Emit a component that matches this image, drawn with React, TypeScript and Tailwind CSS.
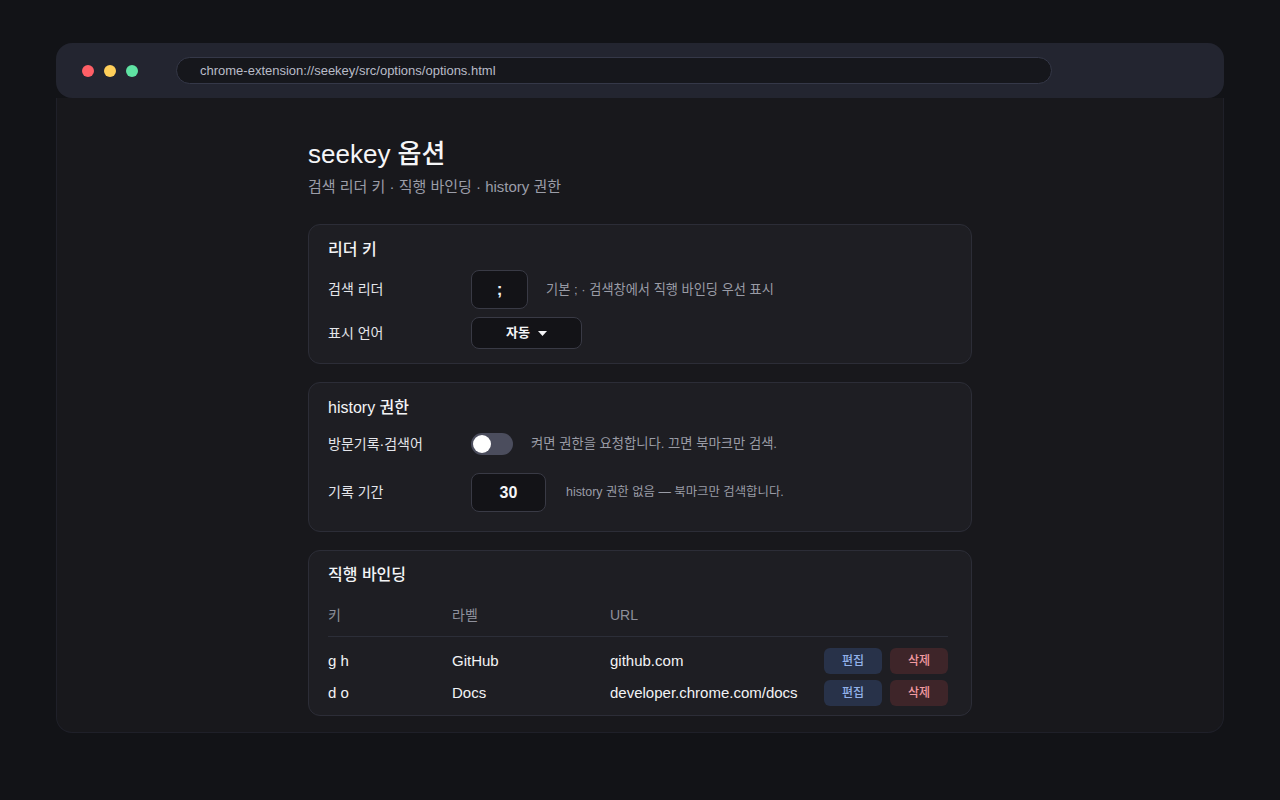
const FONT = { fontFamily: '"Liberation Sans", "Noto Sans CJK KR", sans-serif' };

const bindings = [
  { key: 'g h', label: 'GitHub', url: 'github.com' },
  { key: 'd o', label: 'Docs', url: 'developer.chrome.com/docs' },
];

function Card({ title, children, className = '' }: { title: string; children: React.ReactNode; className?: string }) {
  return (
    <section className={`rounded-xl border border-[#2c2d37] bg-[#1e1e23] pl-[19px] pr-[23px] ${className}`}>
      <h2 className="text-[16px] leading-6 font-medium text-[#f3f4f6]">{title}</h2>
      {children}
    </section>
  );
}

function Row({ label, children, className = '' }: { label: string; children: React.ReactNode; className?: string }) {
  return (
    <div className={`flex items-center ${className}`}>
      <div className="w-[143px] shrink-0 text-[14px] text-[#e4e5ea]">{label}</div>
      {children}
    </div>
  );
}

export default function App() {
  return (
    <div className="min-h-screen bg-[#121317] pt-[43px]" style={FONT}>
      <div className="mx-[56px] w-[1168px]">
        {/* title bar */}
        <div className="flex h-[55px] items-center rounded-2xl bg-[#232530] px-[26px]">
          <div className="flex gap-[10px]">
            <span className="h-3 w-3 rounded-full bg-[#ff5f66]" />
            <span className="h-3 w-3 rounded-full bg-[#ffcf5a]" />
            <span className="h-3 w-3 rounded-full bg-[#5fe3a3]" />
          </div>
          <div className="ml-[38px] flex h-[27px] w-[876px] items-center rounded-full border border-[#353848] bg-[#16171c] pl-[23px] text-[13px] text-[#b9bcc8]">
            chrome-extension://seekey/src/options/options.html
          </div>
        </div>

        {/* page body */}
        <div className="h-[635px] rounded-b-2xl border-x border-b border-[#1f2029] bg-[#18181c] pl-[251px] pt-[40px]">
          <div className="w-[664px]">
            <h1 className="text-[26px] leading-8 font-medium text-[#f5f5f7]">seekey 옵션</h1>
            <p className="mt-[7px] text-[15px] leading-5 text-[#9b9da8]">검색 리더 키 · 직행 바인딩 · history 권한</p>

            <Card title="리더 키" className="mt-[27px] pt-[13px] pb-[14px]">
              <Row label="검색 리더" className="mt-2">
                <div className="flex h-[39px] w-[57px] items-center justify-center rounded-lg border border-[#393a45] bg-[#131317] text-[17px] font-bold text-[#f5f5f7]">
                  ;
                </div>
                <span className="ml-[18px] text-[13.2px] text-[#9a9ca6]">기본 ; · 검색창에서 직행 바인딩 우선 표시</span>
              </Row>
              <Row label="표시 언어" className="mt-2">
                <div className="flex h-[32px] w-[111px] items-center justify-center gap-2 rounded-lg border border-[#393a45] bg-[#131317] text-[13px] font-semibold text-[#f5f5f7]">
                  <span>자동</span>
                  <svg width="9" height="5" viewBox="0 0 9 5">
                    <path d="M0 0h9L4.5 5z" fill="#f5f5f7" />
                  </svg>
                </div>
              </Row>
            </Card>

            <Card title="history 권한" className="mt-[18px] pt-[13px] pb-[19px]">
              <Row label="방문기록·검색어" className="mt-[13px]">
                <div className="relative h-[22px] w-[42px] rounded-full bg-[#4b4d5d]">
                  <span className="absolute left-[2px] top-[2px] h-[18px] w-[18px] rounded-full bg-white" />
                </div>
                <span className="ml-[18px] text-[13.3px] text-[#9a9ca6]">켜면 권한을 요청합니다. 끄면 북마크만 검색.</span>
              </Row>
              <Row label="기록 기간" className="mt-[18px]">
                <div className="flex h-[39px] w-[75px] items-center justify-center rounded-lg border border-[#393a45] bg-[#131317] text-[16px] font-bold text-[#f5f5f7]">
                  30
                </div>
                <span className="ml-[20px] text-[12.4px] text-[#9a9ca6]">history 권한 없음 — 북마크만 검색합니다.</span>
              </Row>
            </Card>

            <Card title="직행 바인딩" className="mt-[18px] pt-3 pb-[9px]">
              <div className="mt-[18px] flex border-b border-[#2c2e38] pb-[11px] text-[14px] leading-5 text-[#8e909b]">
                <div className="w-[124px]">키</div>
                <div className="w-[158px]">라벨</div>
                <div>URL</div>
              </div>
              <div className="mt-[11px] flex flex-col gap-[6px]">
                {bindings.map((b) => (
                  <div key={b.key} className="flex h-[26px] items-center text-[15px] font-medium text-[#f2f3f5]">
                    <div className="w-[124px]">{b.key}</div>
                    <div className="w-[158px]">{b.label}</div>
                    <div className="flex-1">{b.url}</div>
                    <button className="h-[26px] w-[58px] rounded-md bg-[#283249] text-[12px] text-[#92b1ea]">편집</button>
                    <button className="ml-2 h-[26px] w-[58px] rounded-md bg-[#3e2529] text-[12px] text-[#f39ba2]">삭제</button>
                  </div>
                ))}
              </div>
            </Card>
          </div>
        </div>
      </div>
    </div>
  );
}
